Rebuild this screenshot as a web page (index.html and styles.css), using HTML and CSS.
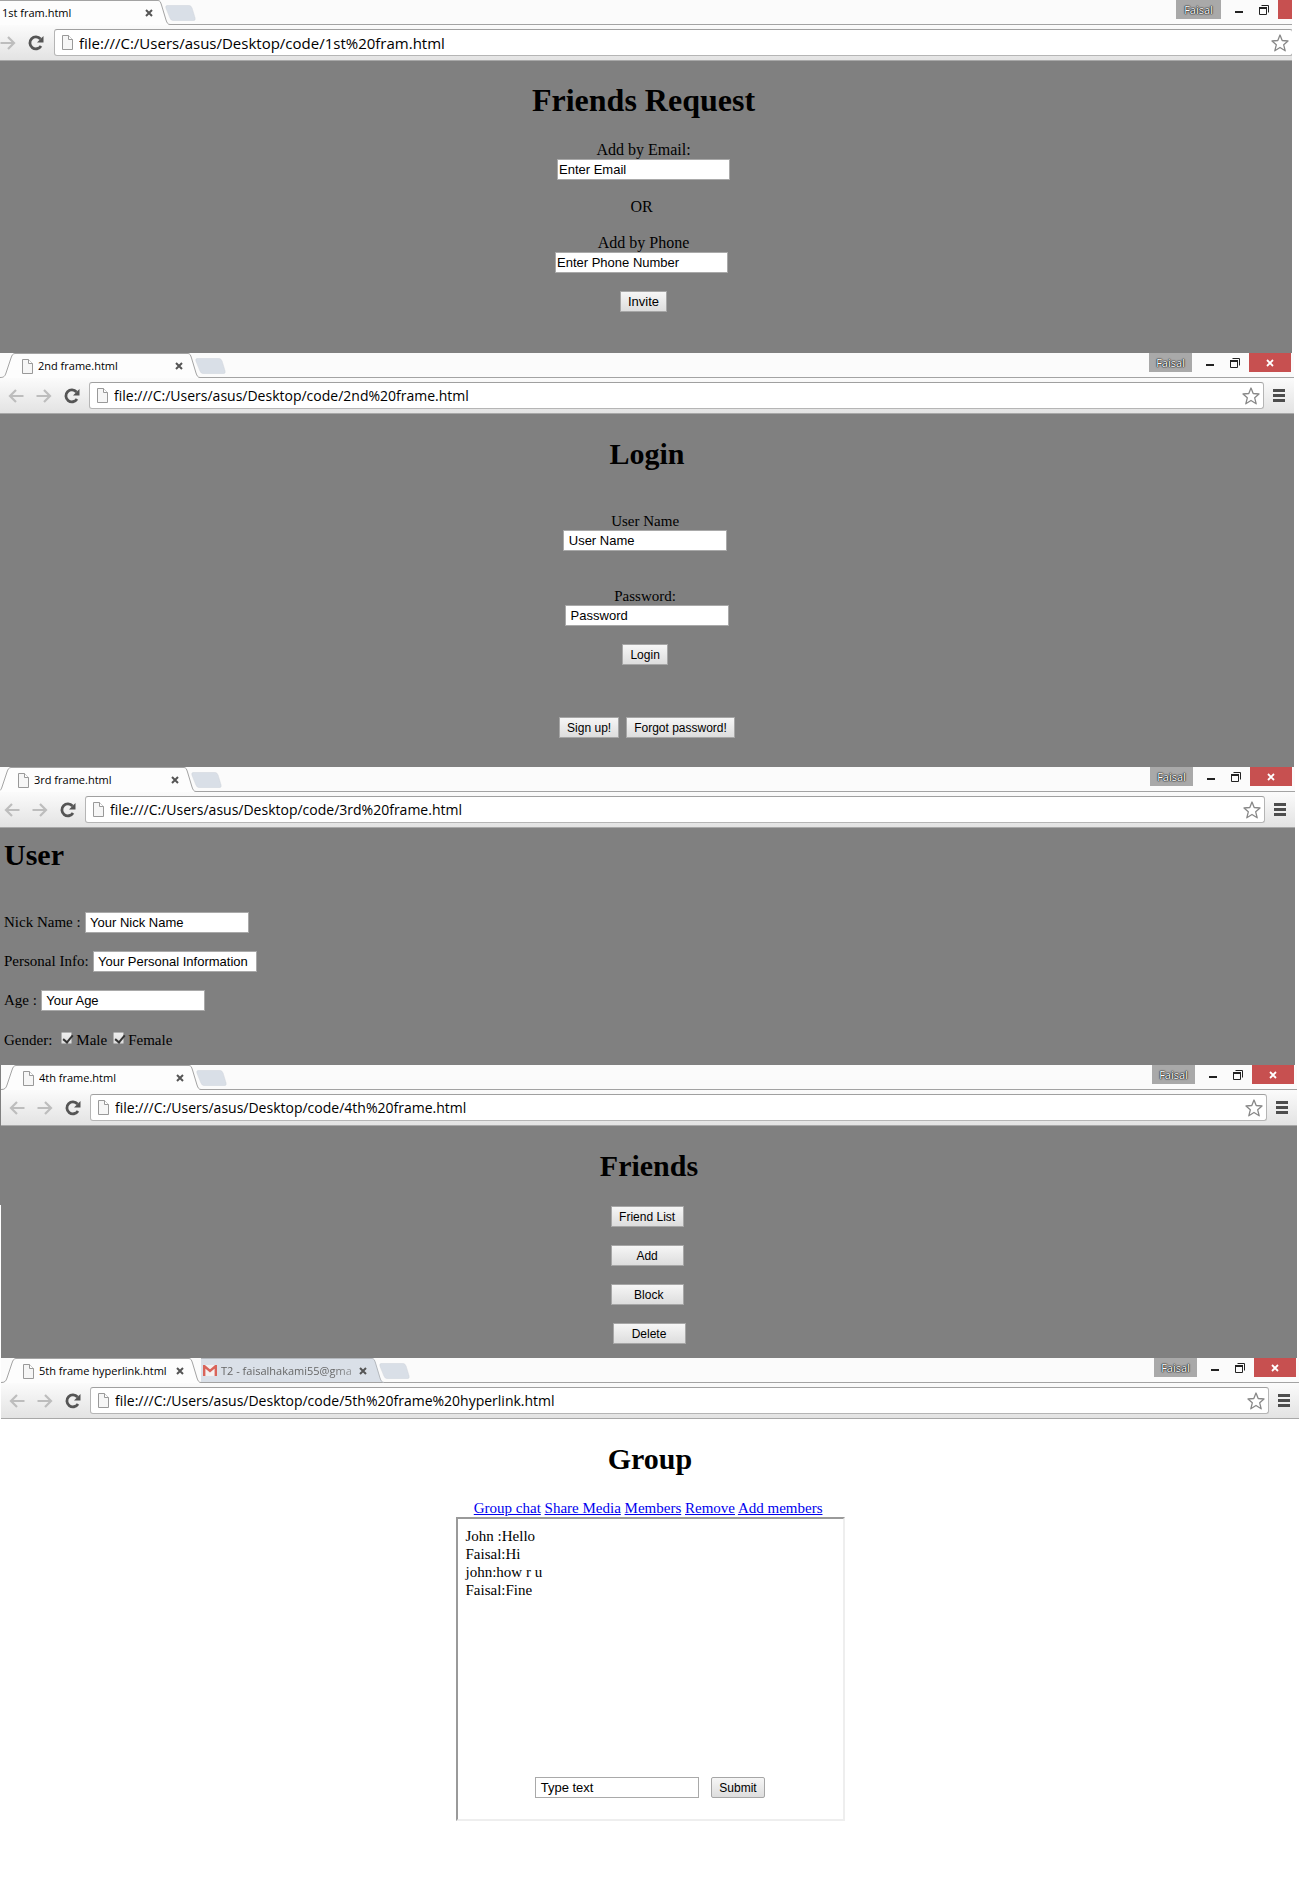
FILE: index.html
```html
<!DOCTYPE html>
<html lang="en">
<head>
<meta charset="utf-8">
<title>Frames</title>
<link rel="stylesheet" href="styles.css">
</head>
<body>
<svg class="defs" aria-hidden="true">
  <symbol id="edge-left" viewBox="0 0 15 25"><path d="M0 25V24.500C4 24.500 5 23 6 20L11 5C12 2 13 .5 15 .5V25z" fill="#fdfdfd"/><path d="M0 24.500C4 24.500 5 23 6 20L11 5C12 2 13 .5 15 .5" fill="none" stroke="#a3a3a3"/></symbol>
  <symbol id="edge-right" viewBox="0 0 12 25"><path d="M0 25V.5C2 .5 2.500 2 3.500 5L8 20C9 23 10 24.500 12 24.500V25z" fill="#fdfdfd"/><path d="M0 .5C2 .5 2.500 2 3.500 5L8 20C9 23 10 24.500 12 24.500" fill="none" stroke="#a3a3a3"/></symbol>
  <symbol id="edge-right-idle" viewBox="0 0 12 25"><path d="M0 24V.5C2 .5 2.500 2 3.500 5L8 20C9 23 10 24 12 24z" fill="#dae0e8"/><path d="M0 .5C2 .5 2.500 2 3.500 5L8 20C9 23 10 24.500 12 24.500" fill="none" stroke="#b4b8bd"/></symbol>
  <symbol id="new" viewBox="0 0 32 16"><path d="M3 0H24Q27 0 28 3L31 13Q32 16 29 16H9Q6 16 5 13L1 3Q0 0 3 0z" fill="#d9dfe7" stroke="#d2d6dc" stroke-width=".5"/></symbol>
  <symbol id="page" viewBox="0 0 11 15"><path d="M.5 .5H6.500L10.500 4.500V14.500H.5z" fill="#f6f6f6" stroke="#999"/><path d="M6.500 .5V4.500H10.500" fill="#fff" stroke="#999"/></symbol>
  <symbol id="x" viewBox="0 0 8 8"><path d="M1 1L7 7M7 1L1 7" stroke="#555" stroke-width="2"/></symbol>
  <symbol id="back" viewBox="0 0 16 14"><path d="M8 1L2 7L8 13M2 7H15.500" fill="none" stroke="#bdbdbd" stroke-width="2.200"/></symbol>
  <symbol id="forward" viewBox="0 0 16 14"><path d="M8 1L14 7L8 13M14 7H.5" fill="none" stroke="#bdbdbd" stroke-width="2.200"/></symbol>
  <symbol id="reload" viewBox="0 0 16 16"><path d="M12.500 4A6 6 0 1 0 13 11" fill="none" stroke="#555" stroke-width="2.800"/><path d="M15.500 1V7.500H9z" fill="#555"/></symbol>
  <symbol id="star" viewBox="0 0 18 18"><path d="M9 1L11.200 6.500L17 7L12.700 10.800L14.200 16.800L9 13.500L3.800 16.800L5.300 10.800L1 7L6.800 6.500z" fill="#fff" stroke="#888" stroke-width="1.300" stroke-linejoin="round"/></symbol>
  <symbol id="menu" viewBox="0 0 12 13"><path d="M0 1.500H12M0 6.500H12M0 11.500H12" stroke="#4d4d4d" stroke-width="3"/></symbol>
  <symbol id="min" viewBox="0 0 8 19"><path d="M0 12H8" stroke="#222" stroke-width="2"/></symbol>
  <symbol id="max" viewBox="0 0 10 10"><path d="M.5 3V9.500H7.500V3M2.500 .5H9.500V7.500" fill="none" stroke="#222"/><path d="M0 3H8" stroke="#222" stroke-width="2"/></symbol>
  <symbol id="close" viewBox="0 0 8 8"><path d="M1 1L7 7M7 1L1 7" stroke="#fff" stroke-width="1.800"/></symbol>
  <symbol id="mail" viewBox="0 0 14 11"><path d="M0 0H14V11H0z" fill="#f4f0f0"/><path d="M1.200 11V1L7 6L12.800 1V11" fill="none" stroke="#d9645a" stroke-width="2.400"/></symbol>
</svg>

<section class="frame frame-request">
  <div class="chrome-clip">
  <header class="chrome">
    <div class="strip">
      <div class="tab"><svg class="edge-l"><use href="#edge-left"/></svg><div class="tab-body"><svg class="page"><use href="#page"/></svg><span class="tab-title">1st fram.html</span><button class="tab-x" aria-label="Close tab"><svg><use href="#x"/></svg></button></div><svg class="edge-r"><use href="#edge-right"/></svg></div>
      <button class="new-tab" aria-label="New tab"><svg><use href="#new"/></svg></button>
      <div class="window"><button class="user">Faisal</button><button class="win-min" aria-label="Minimize"><svg><use href="#min"/></svg></button><button class="win-max" aria-label="Restore"><svg><use href="#max"/></svg></button><button class="win-close" aria-label="Close"><svg><use href="#close"/></svg></button></div>
    </div>
    <div class="toolbar">
      <button class="nav" aria-label="Back"><svg><use href="#back"/></svg></button><button class="nav" aria-label="Forward"><svg><use href="#forward"/></svg></button><button class="nav" aria-label="Reload"><svg class="reload"><use href="#reload"/></svg></button>
      <div class="omnibox"><svg class="page"><use href="#page"/></svg><input class="url" aria-label="Address" value="file:///C:/Users/asus/Desktop/code/1st%20fram.html"><button class="star" aria-label="Bookmark"><svg><use href="#star"/></svg></button></div>
      <button class="menu" aria-label="Menu"><svg><use href="#menu"/></svg></button>
    </div>
  </header>
  </div>
  <main class="content centered">
    <h1>Friends Request</h1>
    <label for="email">Add by Email:</label>
    <div class="line"><input class="field wide" id="email" value="Enter Email"></div>
    <p class="or">OR&nbsp;</p>
    <label for="phone">Add by Phone</label>
    <div class="line"><input class="field wide" id="phone" value="Enter Phone Number">&nbsp;</div>
    <div class="line spaced"><button class="btn">Invite</button></div>
  </main>
</section>

<section class="frame narrow frame-login">
  <header class="chrome">
    <div class="strip">
      <div class="tab"><svg class="edge-l"><use href="#edge-left"/></svg><div class="tab-body"><svg class="page"><use href="#page"/></svg><span class="tab-title">2nd frame.html</span><button class="tab-x" aria-label="Close tab"><svg><use href="#x"/></svg></button></div><svg class="edge-r"><use href="#edge-right"/></svg></div>
      <button class="new-tab" aria-label="New tab"><svg><use href="#new"/></svg></button>
      <div class="window"><button class="user">Faisal</button><button class="win-min" aria-label="Minimize"><svg><use href="#min"/></svg></button><button class="win-max" aria-label="Restore"><svg><use href="#max"/></svg></button><button class="win-close" aria-label="Close"><svg><use href="#close"/></svg></button></div>
    </div>
    <div class="toolbar">
      <button class="nav" aria-label="Back"><svg><use href="#back"/></svg></button><button class="nav" aria-label="Forward"><svg><use href="#forward"/></svg></button><button class="nav" aria-label="Reload"><svg class="reload"><use href="#reload"/></svg></button>
      <div class="omnibox"><svg class="page"><use href="#page"/></svg><input class="url" aria-label="Address" value="file:///C:/Users/asus/Desktop/code/2nd%20frame.html"><button class="star" aria-label="Bookmark"><svg><use href="#star"/></svg></button></div>
      <button class="menu" aria-label="Menu"><svg><use href="#menu"/></svg></button>
    </div>
  </header>
  <main class="content centered">
    <h1>Login</h1>
    <label class="spaced" for="username">User Name&nbsp;</label>
    <div class="line"><input class="field" id="username" value=" User Name">&nbsp;</div>
    <label class="spaced-2" for="password">Password:&nbsp;</label>
    <div class="line"><input class="field" id="password" value=" Password"></div>
    <div class="line spaced"><button class="btn">Login</button>&nbsp;</div>
    <div class="line account"><button class="btn">Sign up!</button><button class="btn">Forgot password!</button></div>
  </main>
</section>

<section class="frame narrow frame-user">
  <div class="chrome-clip">
  <header class="chrome">
    <div class="strip">
      <div class="tab"><svg class="edge-l"><use href="#edge-left"/></svg><div class="tab-body"><svg class="page"><use href="#page"/></svg><span class="tab-title">3rd frame.html</span><button class="tab-x" aria-label="Close tab"><svg><use href="#x"/></svg></button></div><svg class="edge-r"><use href="#edge-right"/></svg></div>
      <button class="new-tab" aria-label="New tab"><svg><use href="#new"/></svg></button>
      <div class="window"><button class="user">Faisal</button><button class="win-min" aria-label="Minimize"><svg><use href="#min"/></svg></button><button class="win-max" aria-label="Restore"><svg><use href="#max"/></svg></button><button class="win-close" aria-label="Close"><svg><use href="#close"/></svg></button></div>
    </div>
    <div class="toolbar">
      <button class="nav" aria-label="Back"><svg><use href="#back"/></svg></button><button class="nav" aria-label="Forward"><svg><use href="#forward"/></svg></button><button class="nav" aria-label="Reload"><svg class="reload"><use href="#reload"/></svg></button>
      <div class="omnibox"><svg class="page"><use href="#page"/></svg><input class="url" aria-label="Address" value="file:///C:/Users/asus/Desktop/code/3rd%20frame.html"><button class="star" aria-label="Bookmark"><svg><use href="#star"/></svg></button></div>
      <button class="menu" aria-label="Menu"><svg><use href="#menu"/></svg></button>
    </div>
  </header>
  </div>
  <main class="content">
    <h1>User</h1>
    <div class="row"><label for="nick">Nick Name :</label><input class="field" id="nick" value=" Your Nick Name"></div>
    <div class="row"><label for="info">Personal Info:</label><input class="field" id="info" value=" Your Personal Information"></div>
    <div class="row"><label for="age">Age :</label><input class="field" id="age" value=" Your Age"></div>
    <div class="row gender"><span>Gender:</span><label class="check"><input type="checkbox" checked>Male</label><label class="check"><input type="checkbox" checked>Female</label></div>
  </main>
</section>

<section class="frame narrow frame-friends">
  <header class="chrome">
    <div class="strip">
      <div class="tab"><svg class="edge-l"><use href="#edge-left"/></svg><div class="tab-body"><svg class="page"><use href="#page"/></svg><span class="tab-title">4th frame.html</span><button class="tab-x" aria-label="Close tab"><svg><use href="#x"/></svg></button></div><svg class="edge-r"><use href="#edge-right"/></svg></div>
      <button class="new-tab" aria-label="New tab"><svg><use href="#new"/></svg></button>
      <div class="window"><button class="user">Faisal</button><button class="win-min" aria-label="Minimize"><svg><use href="#min"/></svg></button><button class="win-max" aria-label="Restore"><svg><use href="#max"/></svg></button><button class="win-close" aria-label="Close"><svg><use href="#close"/></svg></button></div>
    </div>
    <div class="toolbar">
      <button class="nav" aria-label="Back"><svg><use href="#back"/></svg></button><button class="nav" aria-label="Forward"><svg><use href="#forward"/></svg></button><button class="nav" aria-label="Reload"><svg class="reload"><use href="#reload"/></svg></button>
      <div class="omnibox"><svg class="page"><use href="#page"/></svg><input class="url" aria-label="Address" value="file:///C:/Users/asus/Desktop/code/4th%20frame.html"><button class="star" aria-label="Bookmark"><svg><use href="#star"/></svg></button></div>
      <button class="menu" aria-label="Menu"><svg><use href="#menu"/></svg></button>
    </div>
  </header>
  <main class="content centered">
    <h1>Friends</h1>
    <div class="actions">
      <div class="line"><button class="btn action">Friend List</button>&nbsp;</div>
      <div class="line"><button class="btn action">Add</button>&nbsp;</div>
      <div class="line"><button class="btn action">&nbsp;Block</button>&nbsp;</div>
      <div class="line"><button class="btn action">Delete</button></div>
    </div>
  </main>
</section>

<section class="frame narrow frame-group">
  <header class="chrome">
    <div class="strip">
      <div class="tab"><svg class="edge-l"><use href="#edge-left"/></svg><div class="tab-body"><svg class="page"><use href="#page"/></svg><span class="tab-title">5th frame hyperlink.html</span><button class="tab-x" aria-label="Close tab"><svg><use href="#x"/></svg></button></div><svg class="edge-r"><use href="#edge-right"/></svg></div>
      <div class="tab idle"><div class="tab-body"><svg class="mail"><use href="#mail"/></svg><span class="tab-title">T2 - faisalhakami55@gma</span><button class="tab-x" aria-label="Close tab"><svg><use href="#x"/></svg></button></div><svg class="edge-r"><use href="#edge-right-idle"/></svg></div>
      <button class="new-tab" aria-label="New tab"><svg><use href="#new"/></svg></button>
      <div class="window"><button class="user">Faisal</button><button class="win-min" aria-label="Minimize"><svg><use href="#min"/></svg></button><button class="win-max" aria-label="Restore"><svg><use href="#max"/></svg></button><button class="win-close" aria-label="Close"><svg><use href="#close"/></svg></button></div>
    </div>
    <div class="toolbar">
      <button class="nav" aria-label="Back"><svg><use href="#back"/></svg></button><button class="nav" aria-label="Forward"><svg><use href="#forward"/></svg></button><button class="nav" aria-label="Reload"><svg class="reload"><use href="#reload"/></svg></button>
      <div class="omnibox"><svg class="page"><use href="#page"/></svg><input class="url" aria-label="Address" value="file:///C:/Users/asus/Desktop/code/5th%20frame%20hyperlink.html"><button class="star" aria-label="Bookmark"><svg><use href="#star"/></svg></button></div>
      <button class="menu" aria-label="Menu"><svg><use href="#menu"/></svg></button>
    </div>
  </header>
  <main class="content centered">
    <h1>Group</h1>
    <nav class="links"><a href="#chat">Group chat</a> <a href="#media">Share Media</a> <a href="#members">Members</a> <a href="#remove">Remove</a> <a href="#add">Add members</a>&nbsp;</nav>
    <div class="chat" id="chat">
      <div class="messages">John :Hello<br>Faisal:Hi<br>john:how r u<br>Faisal:Fine</div>
      <div class="composer"><input class="field" aria-label="Message" value=" Type text"><button class="btn">Submit</button></div>
    </div>
  </main>
</section>
</body>
</html>
```
FILE: styles.css
```css
* { box-sizing: border-box; }

body {
  margin: 0;
  background: #fff;
  color: #000;
  font: 16px/18px "Liberation Serif", "Times New Roman", serif;
}

.defs { position: absolute; width: 0; height: 0; }

button, input { margin: 0; padding: 0; border: 0; border-radius: 0; }
button { background: none; color: #000; }
svg { display: block; flex: none; }

/* Browser window chrome */
.chrome-clip { overflow: hidden; }
.chrome { font-family: "Open Sans", "Noto Sans", sans-serif; }

.strip {
  display: flex;
  height: 25px;
  background: linear-gradient(#a3a3a3, #a3a3a3) bottom / 100% 1px no-repeat #fbfbfb;
}

.tab { display: flex; height: 25px; }
.edge-l { width: 15px; height: 25px; }
.edge-r { width: 12px; height: 25px; }
.tab-body {
  display: flex;
  align-items: center;
  width: 173px;
  padding: 0 5px 0 7px;
  border-top: 1px solid #a3a3a3;
  background: #fdfdfd;
}
.page { width: 11px; height: 15px; }
.mail { width: 14px; height: 11px; }
.tab-title {
  flex: 1;
  min-width: 0;
  margin-left: 5px;
  overflow: hidden;
  font-size: 11px;
  line-height: 16px;
  white-space: nowrap;
}
.tab-x svg { width: 8px; height: 8px; }

.new-tab { align-self: flex-start; margin: 5px 0 0 -5px; }
.new-tab svg { width: 31px; height: 16px; }

.window { display: flex; height: 19px; margin-left: auto; margin-right: 3px; }
.user {
  width: 43px;
  background: #a9a9a9;
  color: #fff;
  font: 11px/18px "Open Sans", "Noto Sans", sans-serif;
  text-shadow: 0 0 1px #000, 0 0 1px #000, 0 0 2px #222;
}
.win-min { width: 35px; padding-left: 14px; }
.win-min svg { width: 8px; height: 19px; }
.win-max { width: 22px; padding-left: 3px; }
.win-max svg { width: 10px; height: 10px; }
.win-close { display: grid; place-items: center; width: 42px; background: #c75050; }
.win-close svg { width: 8px; height: 8px; }

.toolbar {
  display: flex;
  align-items: center;
  height: 36px;
  padding-left: 8px;
  border-bottom: 1px solid #a8a8a8;
  background: linear-gradient(#fbfbfb, #e3e3e3);
}
.nav { width: 28px; }
.nav svg { width: 16px; height: 14px; }
.nav:nth-child(3) { width: 25px; }
.nav .reload { width: 16px; height: 16px; }
.omnibox {
  display: flex;
  flex: 1;
  align-items: center;
  height: 27px;
  padding: 0 3px 0 7px;
  border: 1px solid #b5b5b5;
  border-top-color: #a0a0a0;
  border-radius: 3px;
  background: #fff;
}
.url {
  flex: 1;
  min-width: 0;
  margin-left: 6px;
  background: none;
  font: 15px/20px "Open Sans", "Noto Sans", sans-serif;
}
.star svg { width: 18px; height: 18px; }
.menu { padding: 0 9px; }
.menu svg { width: 12px; height: 13px; }

/* Page content */
.content { background: #808080; }
.centered { text-align: center; }
h1 { margin: 0; padding: 21px 0 22px; font-size: 32px; line-height: 37px; }
label { display: block; }
.line { height: 21px; }
.spaced { margin-top: 18px; }
.spaced-2 { margin-top: 36px; }

.field {
  width: 164px;
  height: 21px;
  padding: 0 1px;
  border: 1px solid #a9a9a9;
  background: #fff;
  font: 13px "Liberation Sans", Arial, sans-serif;
  vertical-align: top;
  white-space: pre;
}
.wide { width: 173px; }
.btn {
  height: 21px;
  padding: 0 7px;
  border: 1px solid #a6a6a6;
  background: linear-gradient(#f6f6f6, #dddddd);
  font: 13px "Liberation Sans", Arial, sans-serif;
  vertical-align: top;
}

/* Windows drawn at the smaller text scale */
.narrow { font-size: 15px; }
.narrow h1 { font-size: 30px; }
.narrow .url { font-size: 14px; }
.narrow .btn { font-size: 12px; }

.frame-request { margin-right: 7px; }
.frame-request .chrome { margin: 0 -31px 0 -36px; }
.frame-request .tab-body { width: 179px; }
.frame-request .nav:nth-child(3) { width: 26px; }
.frame-request .user { width: 45px; }
.frame-request .content { padding: 0 5px 41px 0; }
.or { margin: 18px 0; }

.frame-login { margin-right: 5px; }
.frame-login .content { padding-bottom: 29px; }
.account { display: flex; justify-content: center; gap: 7px; margin-top: 52px; }

.frame-user { margin-right: 4px; }
.frame-user .chrome { margin-left: -4px; }
.frame-user .content { padding: 0 4px; }
.frame-user h1 { padding: 8px 0 39px; }
.row { display: flex; gap: 4px; height: 21px; margin-bottom: 18px; line-height: 20px; }
.gender { gap: 6px; height: 36px; margin: 0; line-height: 22px; }
.gender span { margin-right: 3px; }
.check { display: flex; gap: 4px; }
.check input {
  appearance: none;
  width: 11px;
  height: 12px;
  margin-top: 3px;
  border: 1px solid #b0b0b0;
  border-radius: 1px;
  background: linear-gradient(#eee, #ddd);
}
.check input:checked::after {
  content: "";
  display: block;
  width: 4px;
  height: 8px;
  margin: 0 0 0 3px;
  border: solid #333;
  border-width: 0 2px 2px 0;
  transform: rotate(40deg);
}

/* The window starts one pixel in from the page edge */
.frame-friends { margin-right: 2px; padding-left: 1px; background: linear-gradient(#808080 140px, #fff 140px); }
.frame-friends .content { padding-bottom: 14px; }
.actions { display: grid; gap: 18px; }
.narrow .action { width: 73px; padding: 0; }

.frame-group { padding-left: 1px; }
.frame-group .content { background: #fff; }
.idle .tab-body {
  width: 171px;
  padding: 0 5px 0 2px;
  border-top-color: #b4b8bd;
  border-bottom: 1px solid #a3a3a3;
  background: #dae0e8;
  color: #666;
}
.idle .tab-title { margin-left: 4px; -webkit-mask-image: linear-gradient(90deg, #000 80%, #0006); mask-image: linear-gradient(90deg, #000 80%, #0006); }
.links a { color: #0000ee; }
.chat {
  display: flex;
  flex-direction: column;
  justify-content: space-between;
  width: 389px;
  min-height: 304px;
  margin: 0 auto;
  padding: 8px 8px 21px;
  border: 2px solid;
  border-color: #9a9a9a #eee #eee #9a9a9a;
  text-align: left;
}
.composer { display: flex; justify-content: center; gap: 12px; }
.composer .btn { border-radius: 2px; }
```
